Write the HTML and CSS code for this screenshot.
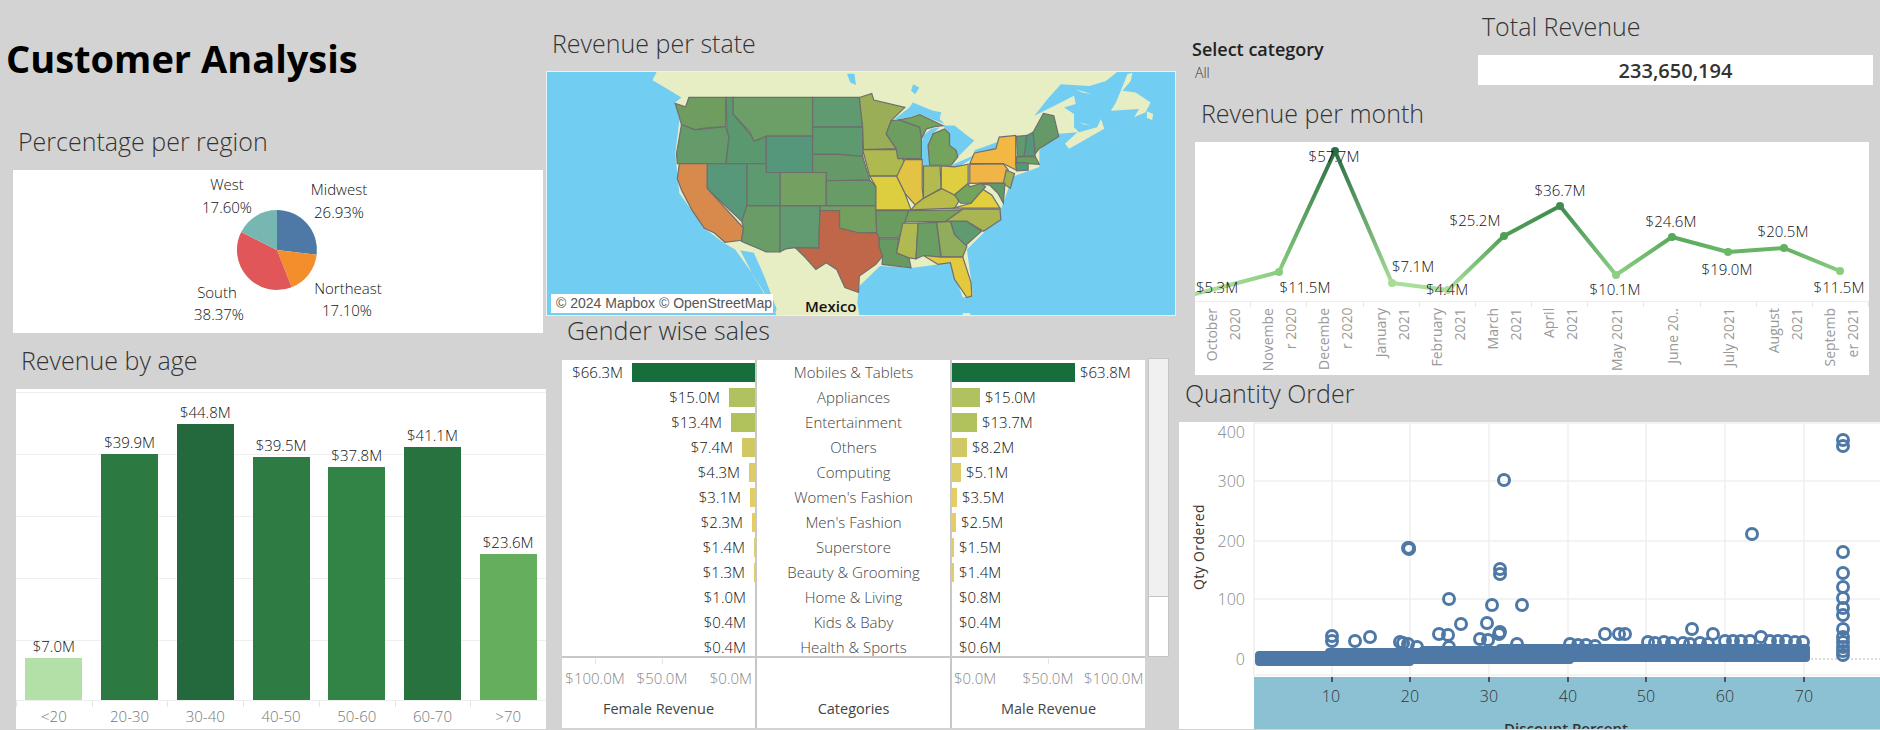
FILE: index.html
```html
<!DOCTYPE html>
<html lang="en">
<head>
  <meta charset="utf-8">
  <title>Customer Analysis</title>
  <link rel="stylesheet" href="styles.css">
</head>
<body>
<div class="dashboard">

  <!-- left column -->
  <div class="col col-left">
    <h1 class="page-title">Customer Analysis</h1>

    <h2 class="panel-title title-region">Percentage per region</h2>
    <div class="pie-card">
      <svg class="fill-svg" viewBox="13 170 530 163">
        <path d="M277 250V210A40 40 0 0 1 316.7 254.8Z" fill="#4e79a7"/>
        <path d="M277 250L316.7 254.8A40 40 0 0 1 291.7 287.2Z" fill="#f28e2b"/>
        <path d="M277 250L291.7 287.2A40 40 0 0 1 241.2 232.1Z" fill="#e15759"/>
        <path d="M277 250L241.2 232.1A40 40 0 0 1 277 210Z" fill="#76b7b2"/>
        <g class="pie-label">
          <text x="227" y="190">West</text>
          <text x="227" y="213">17.60%</text>
          <text x="339" y="195">Midwest</text>
          <text x="339" y="218">26.93%</text>
          <text x="217" y="298">South</text>
          <text x="219" y="320">38.37%</text>
          <text x="348" y="294">Northeast</text>
          <text x="347" y="316">17.10%</text>
        </g>
      </svg>
    </div>

    <h2 class="panel-title title-age">Revenue by age</h2>
    <div class="age-card">
      <div class="age-plot">
        <div class="age-col"><span class="age-value">$7.0M</span><div class="age-bar" style="height:42px;background:#b3e0a6"></div></div>
        <div class="age-col"><span class="age-value">$39.9M</span><div class="age-bar" style="height:246px;background:#2c7a41"></div></div>
        <div class="age-col"><span class="age-value">$44.8M</span><div class="age-bar" style="height:276px;background:#24693d"></div></div>
        <div class="age-col"><span class="age-value">$39.5M</span><div class="age-bar" style="height:243px;background:#2e7c43"></div></div>
        <div class="age-col"><span class="age-value">$37.8M</span><div class="age-bar" style="height:233px;background:#318346"></div></div>
        <div class="age-col"><span class="age-value">$41.1M</span><div class="age-bar" style="height:253px;background:#27723f"></div></div>
        <div class="age-col"><span class="age-value">$23.6M</span><div class="age-bar" style="height:146px;background:#65ae5d"></div></div>
      </div>
      <div class="age-axis">
        <span>&lt;20</span><span>20-30</span><span>30-40</span><span>40-50</span><span>50-60</span><span>60-70</span><span>&gt;70</span>
      </div>
    </div>
  </div>

  <!-- middle column -->
  <div class="col col-mid">
    <h2 class="panel-title title-state">Revenue per state</h2>
    <div class="map-card">
      <svg class="fill-svg" viewBox="15 153 1518 735" preserveAspectRatio="none">
        <g fill="#e8eec4">
          <path d="M280 153L1393 153L1366 180L1326 195L1257 190L1225 235L1193 285L1257 245L1289 225L1293 250L1265 260L1289 280L1289 320L1301 335L1345 320L1354 295L1362 325L1326 350L1277 385L1267 370L1297 335L1253 340L1205 390L1205 440L1140 470L1115 560L1070 640L1030 690L1045 830L1020 835L990 730L900 745L820 740L770 800L765 850L770 888L570 888L510 760L470 690L440 668L395 625L335 520L325 400L335 300L325 245L340 230L300 200L270 178Z"/>
          <path d="M1430 155L1426 180L1406 210L1438 215L1474 245L1462 275L1434 290L1446 265L1378 270L1390 245L1402 210L1418 160Z"/>
          <path d="M1465 272L1480 280L1478 298L1465 292Z"/>
          <path d="M1293 205L1333 220L1309 215Z"/>
          <path d="M1301 305L1329 315L1313 312Z"/>
          <path d="M1020 882L1038 882L1038 888L1020 888Z"/>
        </g>
        <g fill="#72cdf2">
          <path d="M482 692L515 700L540 770L570 870L565 888L545 830L510 760Z"/>
          <path d="M740 158L758 158L762 192L748 185Z"/>
          <path d="M900 190L915 200L905 220L895 210Z"/>
          <path d="M855 295L891 260L899 245L948 270L968 275L964 295L976 310L944 295L916 280L891 290L867 295Z"/>
          <path d="M924 345L944 325L964 320L944 345L936 370L940 435L924 435L918 390Z"/>
          <path d="M972 315L1000 315L1036 350L1048 360L1008 410L1004 390L988 375L988 340Z"/>
          <path d="M992 435L1048 405L1036 420L1004 445Z"/>
          <path d="M1048 390L1104 365L1100 385L1048 398Z"/>
        </g>
        <g class="states">
          <path fill="#6f9d5f" d="M358 230L447 230L447 318L395 323L372 328L340 312L325 248L350 258Z"/>
          <path fill="#659a6b" d="M340 312L372 328L447 318L450 330L455 350L447 430L330 430L328 400L335 350Z"/>
          <path fill="#5a9870" d="M448 230L465 230L465 280L505 340L520 360L545 348L545 430L448 430L455 350L450 330Z"/>
          <path fill="#6c9f68" d="M465 230L657 230L657 347L545 347L515 362L505 335L465 280Z"/>
          <path fill="#55977a" d="M545 347L657 347L657 457L545 457Z"/>
          <path fill="#5f9a70" d="M657 230L770 230L778 320L657 320Z"/>
          <path fill="#5d9a70" d="M657 320L778 320L778 408L720 402L657 402Z"/>
          <path fill="#659a68" d="M657 402L720 402L778 408L795 480L690 482L690 457L657 457Z"/>
          <path fill="#74a062" d="M578 457L690 457L690 558L578 558Z"/>
          <path fill="#689c66" d="M690 482L795 480L810 500L810 558L690 558Z"/>
          <path fill="#5d9a70" d="M498 430L545 430L545 457L578 457L578 558L498 558Z"/>
          <path fill="#57977a" d="M402 430L498 430L498 558L486 605L402 505Z"/>
          <path fill="#d78a4c" d="M335 430L402 430L402 505L490 625L485 662L445 668L420 640L395 625L365 570L340 510L330 475Z"/>
          <path fill="#699c67" d="M498 558L578 558L578 697L545 697L485 665L490 625L486 605Z"/>
          <path fill="#629a72" d="M578 558L675 558L672 686L615 684L592 688L578 697Z"/>
          <path fill="#74a05f" d="M675 558L810 558L812 638L770 640L722 625L722 572L675 572Z"/>
          <path fill="#c0674a" d="M675 572L722 572L722 625L770 640L818 640L818 680L826 710L810 735L770 770L768 820L735 805L715 750L690 730L665 750L640 715L615 684L672 686Z"/>
          <path fill="#99ae57" d="M770 230L800 218L805 238L880 260L847 300L835 340L859 385L780 388L778 320Z"/>
          <path fill="#aeb950" d="M778 388L859 388L880 425L865 468L795 468Z"/>
          <path fill="#6d9e5f" d="M847 300L867 298L916 320L920 340L920 415L863 415L859 385L835 340Z"/>
          <path fill="#e3c344" d="M880 418L922 418L922 505L925 535L905 555L880 520L860 470Z"/>
          <path fill="#dcce3e" d="M795 468L860 468L880 520L895 570L810 570L810 500Z"/>
          <path fill="#6a9c60" d="M810 572L890 572L880 610L865 655L818 655L812 640Z"/>
          <path fill="#669a60" d="M818 658L865 658L860 700L890 715L895 745L860 740L825 735L826 710L818 680Z"/>
          <path fill="#b0ba50" d="M875 610L912 610L907 718L890 715L860 700Z"/>
          <path fill="#6a9e62" d="M912 610L957 608L965 695L968 713L925 708L907 718Z"/>
          <path fill="#77a258" d="M890 572L1018 570L985 605L880 606Z"/>
          <path fill="#b9bc4a" d="M905 555L925 535L970 505L1005 525L1010 545L1000 565L895 570Z"/>
          <path fill="#b3ba50" d="M925 437L965 437L968 505L925 535Z"/>
          <path fill="#dece40" d="M968 437L1000 440L1033 432L1033 490L1000 525L968 505Z"/>
          <path fill="#73a35c" d="M948 340L976 325L988 340L988 375L1004 390L1008 410L992 435L940 435L936 375Z"/>
          <path fill="#73a35c" d="M867 298L891 292L916 282L944 298L972 315L952 318L932 325L920 355L916 320Z"/>
          <path fill="#f0b546" d="M1037 432L1118 430L1130 450L1122 488L1037 490Z"/>
          <path fill="#f3b744" d="M1048 398L1100 385L1108 350L1148 345L1148 425L1150 450L1118 430L1037 430Z"/>
          <path fill="#5f9a70" d="M1150 348L1175 345L1170 408L1152 408Z"/>
          <path fill="#55977a" d="M1175 345L1190 335L1195 408L1168 408Z"/>
          <path fill="#659a68" d="M1190 335L1215 278L1240 285L1252 348L1205 385L1195 400Z"/>
          <path fill="#6aa05f" d="M1150 410L1195 408L1205 432L1150 428Z"/>
          <path fill="#55977a" d="M1148 428L1178 428L1178 450L1150 452Z"/>
          <path fill="#a0b055" d="M1125 450L1145 460L1135 505L1118 490Z"/>
          <path fill="#5f9a68" d="M1060 490L1122 490L1118 550L1105 520L1085 495Z"/>
          <path fill="#e3ce3e" d="M995 565L1040 550L1065 505L1090 525L1110 565Z"/>
          <path fill="#73a35c" d="M1000 525L1033 490L1037 500L1065 490L1075 500L1040 550L1015 550Z"/>
          <path fill="#a9b552" d="M1020 568L1110 568L1112 600L1070 635L1030 605L978 605Z"/>
          <path fill="#5f9a70" d="M990 605L1030 605L1065 635L1025 680L1000 645Z"/>
          <path fill="#90ad5e" d="M957 608L990 605L1000 645L1030 680L1020 712L968 712Z"/>
          <path fill="#e3c93e" d="M925 708L968 713L1020 712L1040 790L1042 830L1030 835L1000 780L990 730L960 735Z"/>
        </g>
      </svg>
      <div class="map-credit">© 2024 Mapbox © OpenStreetMap</div>
      <div class="map-place">Mexico</div>
    </div>

    <h2 class="panel-title title-gender">Gender wise sales</h2>
    <div class="gender-wrap">
      <div class="gender-table">
        <div class="gender-col">
          <div class="gender-rows">
            <div class="g-row g-female"><span>$66.3M</span><i style="width:123px;background:#156e3b"></i></div>
            <div class="g-row g-female"><span>$15.0M</span><i style="width:26px;background:#b0c25f"></i></div>
            <div class="g-row g-female"><span>$13.4M</span><i style="width:24px;background:#b1c25c"></i></div>
            <div class="g-row g-female"><span>$7.4M</span><i style="width:13px;background:#cfc864"></i></div>
            <div class="g-row g-female"><span>$4.3M</span><i style="width:6px;background:#dccc66"></i></div>
            <div class="g-row g-female"><span>$3.1M</span><i style="width:5px;background:#e4cd65"></i></div>
            <div class="g-row g-female"><span>$2.3M</span><i style="width:3px;background:#e4cd65"></i></div>
            <div class="g-row g-female"><span>$1.4M</span><i style="width:1px;background:#e4cd65"></i></div>
            <div class="g-row g-female"><span>$1.3M</span><i style="width:1px;background:#e4cd65"></i></div>
            <div class="g-row g-female"><span>$1.0M</span><i></i></div>
            <div class="g-row g-female"><span>$0.4M</span><i></i></div>
            <div class="g-row g-female"><span>$0.4M</span><i></i></div>
          </div>
          <div class="gender-axis">
            <span class="axis-cell cell-a ticked">$100.0M</span>
            <span class="axis-cell cell-b ticked">$50.0M</span>
            <span class="axis-cell cell-c">$0.0M</span>
          </div>
          <div class="gender-foot">Female Revenue</div>
        </div>
        <div class="gender-col">
          <div class="gender-rows">
            <div class="g-row g-cat">Mobiles &amp; Tablets</div>
            <div class="g-row g-cat">Appliances</div>
            <div class="g-row g-cat">Entertainment</div>
            <div class="g-row g-cat">Others</div>
            <div class="g-row g-cat">Computing</div>
            <div class="g-row g-cat">Women's Fashion</div>
            <div class="g-row g-cat">Men's Fashion</div>
            <div class="g-row g-cat">Superstore</div>
            <div class="g-row g-cat">Beauty &amp; Grooming</div>
            <div class="g-row g-cat">Home &amp; Living</div>
            <div class="g-row g-cat">Kids &amp; Baby</div>
            <div class="g-row g-cat">Health &amp; Sports</div>
          </div>
          <div class="gender-axis"></div>
          <div class="gender-foot">Categories</div>
        </div>
        <div class="gender-col">
          <div class="gender-rows">
            <div class="g-row g-male"><i style="width:123px;background:#156e3b"></i><span>$63.8M</span></div>
            <div class="g-row g-male"><i style="width:28px;background:#b0c25f"></i><span>$15.0M</span></div>
            <div class="g-row g-male"><i style="width:25px;background:#b1c25c"></i><span>$13.7M</span></div>
            <div class="g-row g-male"><i style="width:15px;background:#cfc864"></i><span>$8.2M</span></div>
            <div class="g-row g-male"><i style="width:9px;background:#dccc66"></i><span>$5.1M</span></div>
            <div class="g-row g-male"><i style="width:5px;background:#e4cd65"></i><span>$3.5M</span></div>
            <div class="g-row g-male"><i style="width:4px;background:#e4cd65"></i><span>$2.5M</span></div>
            <div class="g-row g-male"><i style="width:2px;background:#e4cd65"></i><span>$1.5M</span></div>
            <div class="g-row g-male"><i style="width:2px;background:#e4cd65"></i><span>$1.4M</span></div>
            <div class="g-row g-male"><span>$0.8M</span></div>
            <div class="g-row g-male"><span>$0.4M</span></div>
            <div class="g-row g-male"><span>$0.6M</span></div>
          </div>
          <div class="gender-axis">
            <span class="axis-cell cell-d">$0.0M</span>
            <span class="axis-cell cell-e ticked">$50.0M</span>
            <span class="axis-cell cell-f">$100.0M</span>
          </div>
          <div class="gender-foot">Male Revenue</div>
        </div>
      </div>
      <div class="scrollbar"><div class="scroll-thumb"></div></div>
    </div>
  </div>

  <!-- right column -->
  <div class="col col-right">
    <div class="top-row">
      <div class="filter">
        <div class="filter-title">Select category</div>
        <div class="filter-value">All</div>
      </div>
      <div class="total">
        <h2 class="panel-title title-total">Total Revenue</h2>
        <div class="total-box">233,650,194</div>
      </div>
    </div>

    <h2 class="panel-title title-month">Revenue per month</h2>
    <div class="month-card">
      <svg class="month-svg" viewBox="1195 143 674 159">
        <defs>
          <linearGradient id="s1" gradientUnits="userSpaceOnUse" x1="1222" y1="0" x2="1279" y2="0"><stop offset="0" stop-color="#a9dc9b"/><stop offset="1" stop-color="#89cd7f"/></linearGradient>
          <linearGradient id="s2" gradientUnits="userSpaceOnUse" x1="0" y1="273" x2="0" y2="152"><stop offset="0" stop-color="#89cd7f"/><stop offset="1" stop-color="#2a6e43"/></linearGradient>
          <linearGradient id="s3" gradientUnits="userSpaceOnUse" x1="0" y1="152" x2="0" y2="284"><stop offset="0" stop-color="#2a6e43"/><stop offset="1" stop-color="#a5dc96"/></linearGradient>
          <linearGradient id="s4" gradientUnits="userSpaceOnUse" x1="0" y1="291" x2="0" y2="237"><stop offset="0" stop-color="#aee0a0"/><stop offset="1" stop-color="#4f9f56"/></linearGradient>
          <linearGradient id="s5" gradientUnits="userSpaceOnUse" x1="1504" y1="0" x2="1560" y2="0"><stop offset="0" stop-color="#4f9f56"/><stop offset="1" stop-color="#3f8c4e"/></linearGradient>
          <linearGradient id="s6" gradientUnits="userSpaceOnUse" x1="0" y1="207" x2="0" y2="276"><stop offset="0" stop-color="#3f8c4e"/><stop offset="1" stop-color="#8ecf83"/></linearGradient>
          <linearGradient id="s7" gradientUnits="userSpaceOnUse" x1="0" y1="276" x2="0" y2="238"><stop offset="0" stop-color="#8ecf83"/><stop offset="1" stop-color="#58a85c"/></linearGradient>
          <linearGradient id="s8" gradientUnits="userSpaceOnUse" x1="1672" y1="0" x2="1728" y2="0"><stop offset="0" stop-color="#58a85c"/><stop offset="1" stop-color="#6bb866"/></linearGradient>
          <linearGradient id="s9" gradientUnits="userSpaceOnUse" x1="1784" y1="0" x2="1840" y2="0"><stop offset="0" stop-color="#62b062"/><stop offset="1" stop-color="#88cc80"/></linearGradient>
        </defs>
        <g class="month-line">
          <path d="M1195 295L1222 288L1279 273" stroke="url(#s1)"/>
          <path d="M1279 273L1335 152" stroke="url(#s2)"/>
          <path d="M1335 152L1392 284" stroke="url(#s3)"/>
          <path d="M1392 284L1448 291" stroke="#a9de9b"/>
          <path d="M1448 291L1504 237" stroke="url(#s4)"/>
          <path d="M1504 237L1560 207" stroke="url(#s5)"/>
          <path d="M1560 207L1616 276" stroke="url(#s6)"/>
          <path d="M1616 276L1672 238" stroke="url(#s7)"/>
          <path d="M1672 238L1728 253" stroke="url(#s8)"/>
          <path d="M1728 253L1784 249" stroke="#66b464"/>
          <path d="M1784 249L1840 272" stroke="url(#s9)"/>
        </g>
        <circle cx="1279" cy="273" r="4" fill="#89cd7f"/>
        <circle cx="1335" cy="152" r="4" fill="#2a6e43"/>
        <circle cx="1392" cy="284" r="4" fill="#a5dc96"/>
        <circle cx="1448" cy="291" r="4" fill="#aee0a0"/>
        <circle cx="1504" cy="237" r="4" fill="#4f9f56"/>
        <circle cx="1560" cy="207" r="4" fill="#3f8c4e"/>
        <circle cx="1616" cy="276" r="4" fill="#8ecf83"/>
        <circle cx="1672" cy="238" r="4" fill="#58a85c"/>
        <circle cx="1728" cy="253" r="4" fill="#6bb866"/>
        <circle cx="1784" cy="249" r="4" fill="#62b062"/>
        <circle cx="1840" cy="272" r="4" fill="#88cc80"/>
        <g class="month-label">
          <text x="1217" y="294">$5.3M</text>
          <text x="1305" y="294">$11.5M</text>
          <text x="1334" y="163">$57.7M</text>
          <text x="1413" y="273">$7.1M</text>
          <text x="1447" y="296">$4.4M</text>
          <text x="1475" y="227">$25.2M</text>
          <text x="1560" y="197">$36.7M</text>
          <text x="1615" y="296">$10.1M</text>
          <text x="1671" y="228">$24.6M</text>
          <text x="1727" y="276">$19.0M</text>
          <text x="1783" y="238">$20.5M</text>
          <text x="1839" y="294">$11.5M</text>
        </g>
      </svg>
      <div class="month-axis">
        <div class="month-cell"><span>October<br>2020</span></div>
        <div class="month-cell"><span>Novembe<br>r 2020</span></div>
        <div class="month-cell"><span>Decembe<br>r 2020</span></div>
        <div class="month-cell"><span>January<br>2021</span></div>
        <div class="month-cell"><span>February<br>2021</span></div>
        <div class="month-cell"><span>March<br>2021</span></div>
        <div class="month-cell"><span>April<br>2021</span></div>
        <div class="month-cell"><span>May 2021</span></div>
        <div class="month-cell"><span>June 20..</span></div>
        <div class="month-cell"><span>July 2021</span></div>
        <div class="month-cell"><span>August<br>2021</span></div>
        <div class="month-cell"><span>Septemb<br>er 2021</span></div>
      </div>
    </div>

    <h2 class="panel-title title-qty">Quantity Order</h2>
    <div class="scatter-card">
      <svg class="fill-svg" viewBox="1179 423 701 307">
        <rect x="1254" y="678" width="626" height="52" fill="#8bc1d3"/>
        <g class="grid">
          <path d="M1254 424H1880M1254 482H1880M1254 542H1880M1254 600H1880M1254 676H1880"/>
          <path d="M1254 424V678M1332 424V678M1410 424V678M1489 424V678M1568 424V678M1646 424V678M1725 424V678M1804 424V678"/>
        </g>
        <path class="zero-line" d="M1811 660H1880"/>
        <g class="ring">
          <circle cx="1843" cy="441" r="5.5"/><circle cx="1843" cy="447" r="5.5"/>
          <circle cx="1504" cy="481" r="5.5"/>
          <circle cx="1409" cy="549" r="5.5"/><circle cx="1409" cy="550" r="5.5"/><circle cx="1408" cy="549" r="5.5"/>
          <circle cx="1752" cy="535" r="5.5"/>
          <circle cx="1843" cy="553" r="5.5"/><circle cx="1843" cy="574" r="5.5"/><circle cx="1843" cy="588" r="5.5"/>
          <circle cx="1843" cy="599" r="5.5"/><circle cx="1843" cy="609" r="5.5"/><circle cx="1843" cy="616" r="5.5"/>
          <circle cx="1843" cy="630" r="5.5"/><circle cx="1843" cy="638" r="5.5"/><circle cx="1843" cy="643" r="5.5"/>
          <circle cx="1843" cy="648" r="5.5"/><circle cx="1843" cy="652" r="5.5"/><circle cx="1843" cy="656" r="5.5"/>
          <circle cx="1500" cy="570" r="5.5"/><circle cx="1500" cy="575" r="5.5"/>
          <circle cx="1449" cy="600" r="5.5"/><circle cx="1492" cy="606" r="5.5"/><circle cx="1522" cy="606" r="5.5"/>
          <circle cx="1461" cy="625" r="5.5"/><circle cx="1487" cy="624" r="5.5"/>
          <circle cx="1439" cy="635" r="5.5"/><circle cx="1448" cy="636" r="5.5"/>
          <circle cx="1500" cy="633" r="5.5"/><circle cx="1499" cy="635" r="5.5"/>
          <circle cx="1480" cy="640" r="5.5"/><circle cx="1488" cy="641" r="5.5"/>
          <circle cx="1332" cy="637" r="5.5"/><circle cx="1332" cy="642" r="5.5"/>
          <circle cx="1355" cy="642" r="5.5"/><circle cx="1370" cy="638" r="5.5"/>
          <circle cx="1400" cy="643" r="5.5"/><circle cx="1403" cy="644" r="5.5"/><circle cx="1408" cy="645" r="5.5"/><circle cx="1417" cy="648" r="5.5"/>
          <circle cx="1449" cy="648" r="5.5"/><circle cx="1517" cy="645" r="5.5"/>
          <circle cx="1605" cy="635" r="5.5"/><circle cx="1619" cy="635" r="5.5"/><circle cx="1625" cy="635" r="5.5"/>
          <circle cx="1692" cy="630" r="5.5"/><circle cx="1713" cy="635" r="5.5"/><circle cx="1761" cy="638" r="5.5"/>
          <circle cx="1570" cy="645" r="5.5"/><circle cx="1578" cy="646" r="5.5"/><circle cx="1586" cy="646" r="5.5"/><circle cx="1595" cy="647" r="5.5"/>
          <circle cx="1648" cy="643" r="5.5"/><circle cx="1655" cy="644" r="5.5"/><circle cx="1664" cy="643" r="5.5"/><circle cx="1672" cy="644" r="5.5"/>
          <circle cx="1683" cy="644" r="5.5"/><circle cx="1690" cy="645" r="5.5"/><circle cx="1700" cy="644" r="5.5"/><circle cx="1708" cy="645" r="5.5"/>
          <circle cx="1725" cy="642" r="5.5"/><circle cx="1733" cy="642" r="5.5"/><circle cx="1741" cy="642" r="5.5"/><circle cx="1750" cy="642" r="5.5"/>
          <circle cx="1770" cy="642" r="5.5"/><circle cx="1778" cy="642" r="5.5"/><circle cx="1786" cy="642" r="5.5"/><circle cx="1795" cy="643" r="5.5"/><circle cx="1803" cy="643" r="5.5"/>
        </g>
        <path class="band" d="M1259 656H1329V653H1423V651H1500V649H1806V659H1570V661H1410V663H1259Z"/>
        <g class="y-label">
          <text x="1245" y="439">400</text>
          <text x="1245" y="488">300</text>
          <text x="1245" y="548">200</text>
          <text x="1245" y="606">100</text>
          <text x="1245" y="666">0</text>
        </g>
        <text class="y-title" transform="translate(1204 548) rotate(-90)">Qty Ordered</text>
        <path class="x-tick" d="M1332 678v5M1410 678v5M1489 678v5M1568 678v5M1646 678v5M1725 678v5M1804 678v5"/>
        <g class="x-label">
          <text x="1331" y="703">10</text>
          <text x="1410" y="703">20</text>
          <text x="1489" y="703">30</text>
          <text x="1568" y="703">40</text>
          <text x="1646" y="703">50</text>
          <text x="1725" y="703">60</text>
          <text x="1804" y="703">70</text>
        </g>
        <text class="x-title" x="1566" y="735">Discount Percent</text>
      </svg>
    </div>
  </div>

</div>
</body>
</html>
```

FILE: styles.css
```css
html, body {
  margin: 0;
  height: 730px;
  overflow: hidden;
  background-color: #d3d3d3;
}

body {
  font-family: "Open Sans", "Noto Sans", sans-serif;
  color: #333;
}

.dashboard {
  display: flex;
  width: 1880px;
  height: 730px;
}

.col { flex: none; }
.col-left { width: 546px; padding-top: 35px; }
.col-mid { width: 632px; padding-top: 30px; }
.col-right { width: 702px; }

.fill-svg {
  display: block;
  width: 100%;
  height: 100%;
}

/* Titles */
.page-title {
  margin: 0 0 0 6px;
  height: 46px;
  font-size: 38px;
  line-height: 46px;
  font-weight: 700;
  color: #000;
}

.panel-title {
  margin: 0;
  height: 26px;
  font-size: 25px;
  line-height: 26px;
  font-weight: 300;
  color: #333;
  white-space: nowrap;
}

.title-region { margin: 47px 0 16px 18px; }
.title-age { margin: 14px 0 16px 21px; }
.title-state { margin: 0 0 15px 6px; }
.title-gender { margin: 1px 0 17px 21px; }
.title-total { margin: 0 0 16px 4px; }
.title-month { margin: 15px 0 16px 23px; }
.title-qty { margin: 5px 0 16px 7px; }

/* Pie */
.pie-card {
  margin-left: 13px;
  width: 530px;
  height: 163px;
  background: #fff;
}

.pie-label text {
  font-size: 15px;
  font-weight: 300;
  fill: #111;
  text-anchor: middle;
}

/* Revenue by age */
.age-card {
  margin-left: 16px;
  width: 530px;
  height: 340px;
  background: #fff;
}

.age-plot {
  display: flex;
  height: 312px;
  border-bottom: 1px solid #eee;
  box-sizing: border-box;
  background-image: linear-gradient(#efefef 1px, transparent 1px);
  background-size: 100% 62px;
  background-position: 0 3px;
}

.age-col {
  flex: 1;
  display: flex;
  flex-direction: column;
  justify-content: flex-end;
  align-items: center;
}

.age-value {
  margin-bottom: 2px;
  font-size: 15px;
  line-height: 20px;
  font-weight: 300;
  color: #111;
}

.age-bar { width: 57px; }

.age-axis {
  display: flex;
  height: 28px;
}

.age-axis span {
  flex: 1;
  padding-top: 5px;
  text-align: center;
  font-size: 15px;
  line-height: 20px;
  font-weight: 300;
  color: #777;
  background: linear-gradient(#e4e4e4, #e4e4e4) left top / 1px 6px no-repeat;
}

/* Map */
.map-card {
  position: relative;
  width: 630px;
  height: 245px;
  box-sizing: border-box;
  border: 1px solid #eaf1f2;
  background: #72cdf2;
  overflow: hidden;
}

.states path {
  stroke: #6e6e6e;
  stroke-width: 1.2;
  vector-effect: non-scaling-stroke;
}

.map-credit {
  position: absolute;
  left: 4px;
  bottom: 2px;
  width: 222px;
  height: 19px;
  box-sizing: border-box;
  padding-left: 5px;
  background: #fff;
  font-family: "Liberation Sans", Arial, sans-serif;
  font-size: 14px;
  line-height: 19px;
  color: #555;
  white-space: nowrap;
}

.map-place {
  position: absolute;
  left: 258px;
  bottom: -1px;
  width: 50px;
  font-size: 15px;
  line-height: 19px;
  font-weight: 600;
  color: #111;
  text-align: center;
}

/* Gender table */
.gender-wrap {
  display: flex;
  margin-left: 16px;
  gap: 3px;
}

.gender-table {
  display: flex;
  gap: 2px;
  width: 583px;
  height: 368px;
  background: #c8c8c8;
}

.gender-col {
  flex: 1;
  background: #fff;
}

.gender-rows {
  height: 296px;
  overflow: hidden;
}

.g-row {
  display: flex;
  align-items: center;
  height: 25px;
  font-size: 15px;
  font-weight: 300;
  color: #111;
  white-space: nowrap;
}

.g-row span { margin-bottom: 2px; }
.g-row i { height: 19px; flex: none; }
.g-female { justify-content: flex-end; gap: 9px; }
.g-male { gap: 5px; }
.g-male span:first-child { margin-left: 7px; }
.g-cat { justify-content: center; box-sizing: border-box; padding-bottom: 2px; color: #444; }

.gender-axis {
  display: flex;
  align-items: center;
  height: 40px;
  border-top: 2px solid #c8c8c8;
  font-size: 15px;
  font-weight: 300;
  color: #888;
}

.axis-cell {
  height: 40px;
  line-height: 40px;
  white-space: nowrap;
}

.ticked { background: linear-gradient(#e6e6e6, #e6e6e6) center top / 1px 6px no-repeat; }
.cell-a { width: 66px; text-align: center; }
.cell-b { width: 68px; text-align: center; }
.cell-c { width: 56px; padding-right: 3px; text-align: right; }
.cell-d { width: 58px; padding-left: 2px; }
.cell-e { width: 72px; text-align: center; }
.cell-f { width: 59px; padding-right: 2px; text-align: right; }

.gender-foot {
  height: 22px;
  text-align: center;
  font-size: 14.5px;
  line-height: 22px;
  font-weight: 500;
  color: #444;
}

.scrollbar {
  width: 21px;
  height: 299px;
  margin-top: -2px;
  box-sizing: border-box;
  border: 1px solid #c4c4c4;
  background: #fff;
}

.scroll-thumb {
  height: 237px;
  background: #f0f0f0;
  border-bottom: 1px solid #c4c4c4;
}

/* Right top */
.top-row {
  display: flex;
  padding-top: 13px;
}

.filter {
  width: 286px;
  margin-left: 14px;
  padding-top: 24px;
}

.filter-title {
  height: 24px;
  font-size: 18px;
  line-height: 24px;
  font-weight: 600;
  color: #222;
}

.filter-value {
  margin: 2px 0 0 3px;
  font-size: 14px;
  line-height: 20px;
  font-weight: 300;
  color: #333;
}

.total { width: 395px; }

.total-box {
  height: 30px;
  background: #fff;
  text-align: center;
  font-size: 20px;
  line-height: 31px;
  font-weight: 600;
  color: #333;
}

/* Revenue per month */
.month-card {
  margin-left: 17px;
  width: 674px;
  height: 233px;
  background: #fff;
}

.month-svg {
  display: block;
  width: 674px;
  height: 159px;
}

.month-line path {
  fill: none;
  stroke-width: 4;
  stroke-linecap: round;
}

.month-label text {
  font-size: 15px;
  font-weight: 300;
  fill: #111;
  text-anchor: middle;
}

.month-axis {
  display: flex;
  height: 74px;
  box-sizing: border-box;
  border-top: 1px solid #eee;
}

.month-cell {
  flex: 1;
  display: flex;
  justify-content: center;
  align-items: flex-start;
  overflow: hidden;
  background: linear-gradient(#e8e8e8, #e8e8e8) right top / 1px 5px no-repeat;
}

.month-cell span {
  margin-top: 6px;
  writing-mode: vertical-rl;
  transform: rotate(180deg);
  text-align: right;
  font-size: 14px;
  line-height: 23px;
  color: #999;
  white-space: nowrap;
}

/* Scatter */
.scatter-card {
  margin-left: 1px;
  width: 701px;
  height: 307px;
  background: #fff;
}

.grid path {
  fill: none;
  stroke: #f0f0f0;
  stroke-width: 1.5;
}

.zero-line {
  stroke: #bbb;
  stroke-dasharray: 2 2;
  fill: none;
}

.ring circle {
  fill: none;
  stroke: #4e78a6;
  stroke-width: 3;
}

.band {
  fill: #4e78a6;
  stroke: #4e78a6;
  stroke-width: 8;
  stroke-linejoin: round;
}

.y-label text {
  font-size: 16px;
  font-weight: 300;
  fill: #888;
  text-anchor: end;
}

.y-title {
  font-size: 14px;
  font-weight: 500;
  fill: #333;
  text-anchor: middle;
  letter-spacing: 0.4px;
}

.x-tick {
  fill: none;
  stroke: #333;
  stroke-width: 1.5;
}

.x-label text {
  font-size: 16px;
  font-weight: 300;
  fill: #333;
  text-anchor: middle;
}

.x-title {
  font-size: 15px;
  font-weight: 600;
  fill: #333;
  text-anchor: middle;
}
```
